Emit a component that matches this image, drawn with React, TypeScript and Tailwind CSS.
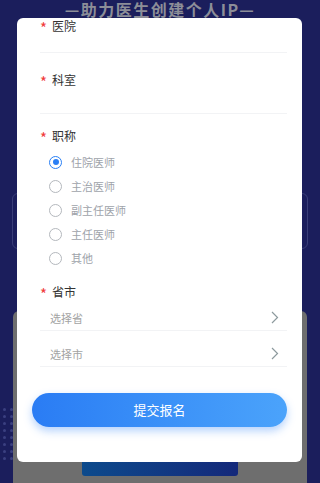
import React, { useState } from 'react';

const titles = ['住院医师', '主治医师', '副主任医师', '主任医师', '其他'];

const Label = ({ text, className = '' }: { text: string; className?: string }) => (
  <div className={`flex items-center h-[20px] pl-[8px] ${className}`}>
    <span className="w-[12px] text-[15px] leading-none text-[#f03a3a] pt-[3px]">*</span>
    <span className="text-[12px] leading-[16px] text-[#333]">{text}</span>
  </div>
);

const Chevron = () => (
  <svg width="8" height="13" viewBox="0 0 8 13" fill="none">
    <path d="M1 1l5.5 5.5L1 12" stroke="#8d9a9e" strokeWidth="1.2" />
  </svg>
);

export default function App() {
  const [picked, setPicked] = useState(0);

  return (
    <div
      className="relative w-[320px] h-[483px] overflow-hidden bg-[#1b1e5c]"
      style={{ fontFamily: '"Noto Sans CJK SC", "Noto Sans", sans-serif' }}
    >
      {/* underlying page (dimmed) */}
      <div className="flex flex-col h-full">
        <div className="h-[18px] pt-[1px]">
          <div className="h-[16px] text-center text-[16px] font-bold leading-[16px] tracking-[1.5px] text-[#8c8e98]">
            —助力医生创建个人IP—
          </div>
        </div>
        <div className="mt-[175px] mx-[12px] h-[56px] rounded-[6px] border border-[#3a3e78]" />
        <div className="mt-[62px] mx-[13px] flex-1 rounded-t-[6px] bg-[#6e6e6e] flex flex-col items-center justify-end">
          <div className="w-[156px] h-[14px] rounded-b-[3px] bg-gradient-to-r from-[#0c4a8c] to-[#14287a] mb-[7px]" />
        </div>
      </div>
      <div className="absolute left-[3px] top-[408px] grid grid-cols-2 gap-x-[4px] gap-y-[4px]">
        {Array.from({ length: 16 }).map((_, i) => (
          <span key={i} className="w-[3px] h-[3px] rounded-full bg-[#3b4080]" />
        ))}
      </div>

      {/* modal card */}
      <div className="absolute left-[17px] top-[18px] w-[285px] h-[444px] bg-white rounded-[6px] overflow-hidden">
        <div className="flex flex-col px-[15px] -mt-[2px]">
          <Label text="医院" />
          <div className="h-[16px] ml-[8px] border-b border-[#f2f3f5] box-content" />

          <Label text="科室" className="mt-[17px]" />
          <div className="h-[23px] ml-[8px] border-b border-[#f2f3f5] box-content" />

          <Label text="职称" className="mt-[12px]" />
          <div className="flex flex-col mt-[4px] pl-[17px]">
            {titles.map((t, i) => (
              <button
                key={t}
                onClick={() => setPicked(i)}
                className="h-[24px] flex items-center gap-[9px] text-left"
              >
                {picked === i ? (
                  <span className="w-[13px] h-[13px] rounded-full border border-[#2a7ff5] flex items-center justify-center">
                    <span className="w-[6px] h-[6px] rounded-full bg-[#2a7ff5]" />
                  </span>
                ) : (
                  <span className="w-[13px] h-[13px] rounded-full border border-[#b4b8bd]" />
                )}
                <span className="text-[11px] leading-[16px] text-[#9ea3aa]">{t}</span>
              </button>
            ))}
          </div>

          <Label text="省市" className="mt-[12px]" />
          <div className="h-[29px] ml-[8px] pl-[10px] pr-[8px] flex items-end justify-between pb-[4px] border-b border-[#f2f3f5]">
            <span className="text-[11px] leading-[16px] text-[#a3a3a3]">选择省</span>
            <span className="mb-[2px]"><Chevron /></span>
          </div>
          <div className="h-[36px] ml-[8px] pl-[10px] pr-[8px] flex items-end justify-between pb-[4px] border-b border-[#f2f3f5]">
            <span className="text-[11px] leading-[16px] text-[#a3a3a3]">选择市</span>
            <span className="mb-[2px]"><Chevron /></span>
          </div>

          <button className="mt-[26px] h-[34px] rounded-full bg-gradient-to-r from-[#2a7cf4] to-[#4ba3fb] text-white text-[13px] shadow-[0_4px_8px_rgba(42,127,245,0.35)]">
            提交报名
          </button>
        </div>
      </div>
    </div>
  );
}
